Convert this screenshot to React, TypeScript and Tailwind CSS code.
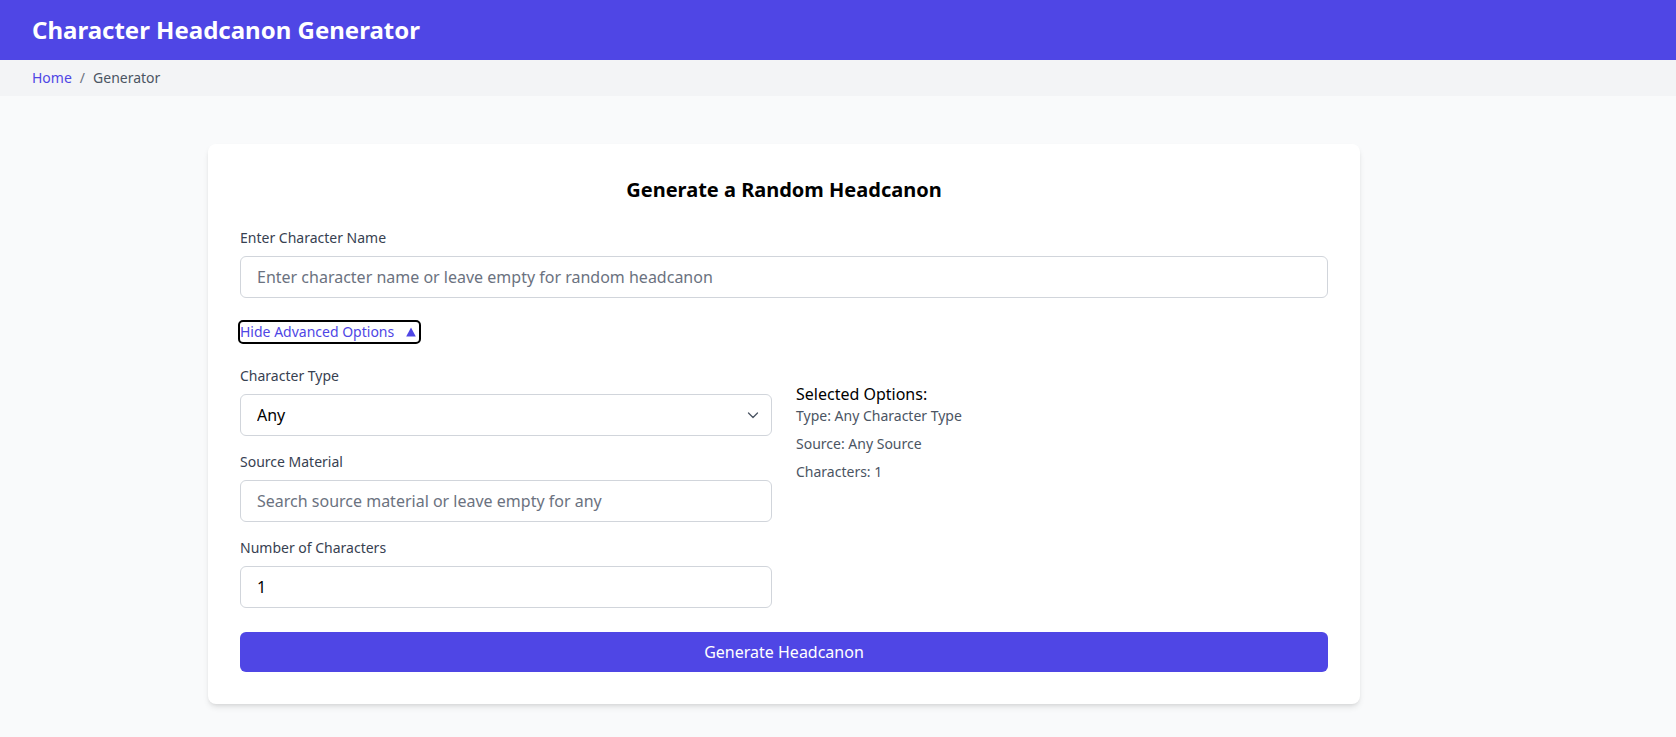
import React from "react";

export default function App() {
  const font = { fontFamily: '"Noto Sans", "Liberation Sans", sans-serif' };
  return (
    <div className="min-h-screen bg-[#f9fafb]" style={font}>
      <header className="h-[60px] bg-[#4f46e5] flex items-center px-8">
        <h1 className="text-2xl font-bold text-white">Character Headcanon Generator</h1>
      </header>
      <nav className="h-[36px] bg-[#f3f4f6] flex items-center px-8 text-sm">
        <a className="text-[#4f46e5]">Home</a>
        <span className="mx-2 text-[#6b7280]">/</span>
        <span className="text-[#4b5563]">Generator</span>
      </nav>
      <main className="pt-12 pl-[208px]">
        <div className="w-[1152px] bg-white rounded-lg shadow-md p-8">
          <h2 className="text-xl font-bold text-center text-black mb-6">Generate a Random Headcanon</h2>
          <div className="mb-6">
            <label className="block text-sm text-[#374151] mb-2">Enter Character Name</label>
            <input
              className="w-full border border-[#d1d5db] rounded-md px-4 py-2 text-base placeholder:text-[#6b7280] outline-none"
              placeholder="Enter character name or leave empty for random headcanon"
            />
          </div>
          <button className="flex items-center text-sm text-[#4f46e5] outline-2 outline-black rounded-[3px] h-5 pr-[3px]">
            Hide Advanced Options
            <svg className="ml-[12px] w-[10px] h-[10px]" viewBox="0 0 10 10" fill="currentColor">
              <path d="M5 0.5L9.8 9.5H0.2Z" />
            </svg>
          </button>
          <div className="grid grid-cols-2 gap-6 mt-6">
            <div className="flex flex-col gap-4">
              <div>
                <label className="block text-sm text-[#374151] mb-2">Character Type</label>
                <div className="relative">
                  <select className="w-full appearance-none border border-[#d1d5db] rounded-md px-4 py-2 text-base text-black bg-white outline-none">
                    <option>Any</option>
                  </select>
                  <svg className="absolute right-[13px] top-1/2 -translate-y-1/2 w-[12px] h-[12px] text-[#4b5563]" viewBox="0 0 12 12" fill="none" stroke="currentColor" strokeWidth="1.3" strokeLinecap="round" strokeLinejoin="round">
                    <path d="M1.5 4L6 8.5L10.5 4" />
                  </svg>
                </div>
              </div>
              <div>
                <label className="block text-sm text-[#374151] mb-2">Source Material</label>
                <input
                  className="w-full border border-[#d1d5db] rounded-md px-4 py-2 text-base placeholder:text-[#6b7280] outline-none"
                  placeholder="Search source material or leave empty for any"
                />
              </div>
              <div>
                <label className="block text-sm text-[#374151] mb-2">Number of Characters</label>
                <input
                  className="w-full border border-[#d1d5db] rounded-md px-4 py-2 text-base text-black outline-none"
                  defaultValue="1"
                />
              </div>
            </div>
            <div className="mt-4">
              <h3 className="text-base text-black">Selected Options:</h3>
              <div className="flex flex-col gap-2 text-sm text-[#4b5563]">
                <p>Type: Any Character Type</p>
                <p>Source: Any Source</p>
                <p>Characters: 1</p>
              </div>
            </div>
          </div>
          <button className="mt-6 w-full h-10 bg-[#4f46e5] text-white text-base rounded-md">Generate Headcanon</button>
        </div>
      </main>
    </div>
  );
}
